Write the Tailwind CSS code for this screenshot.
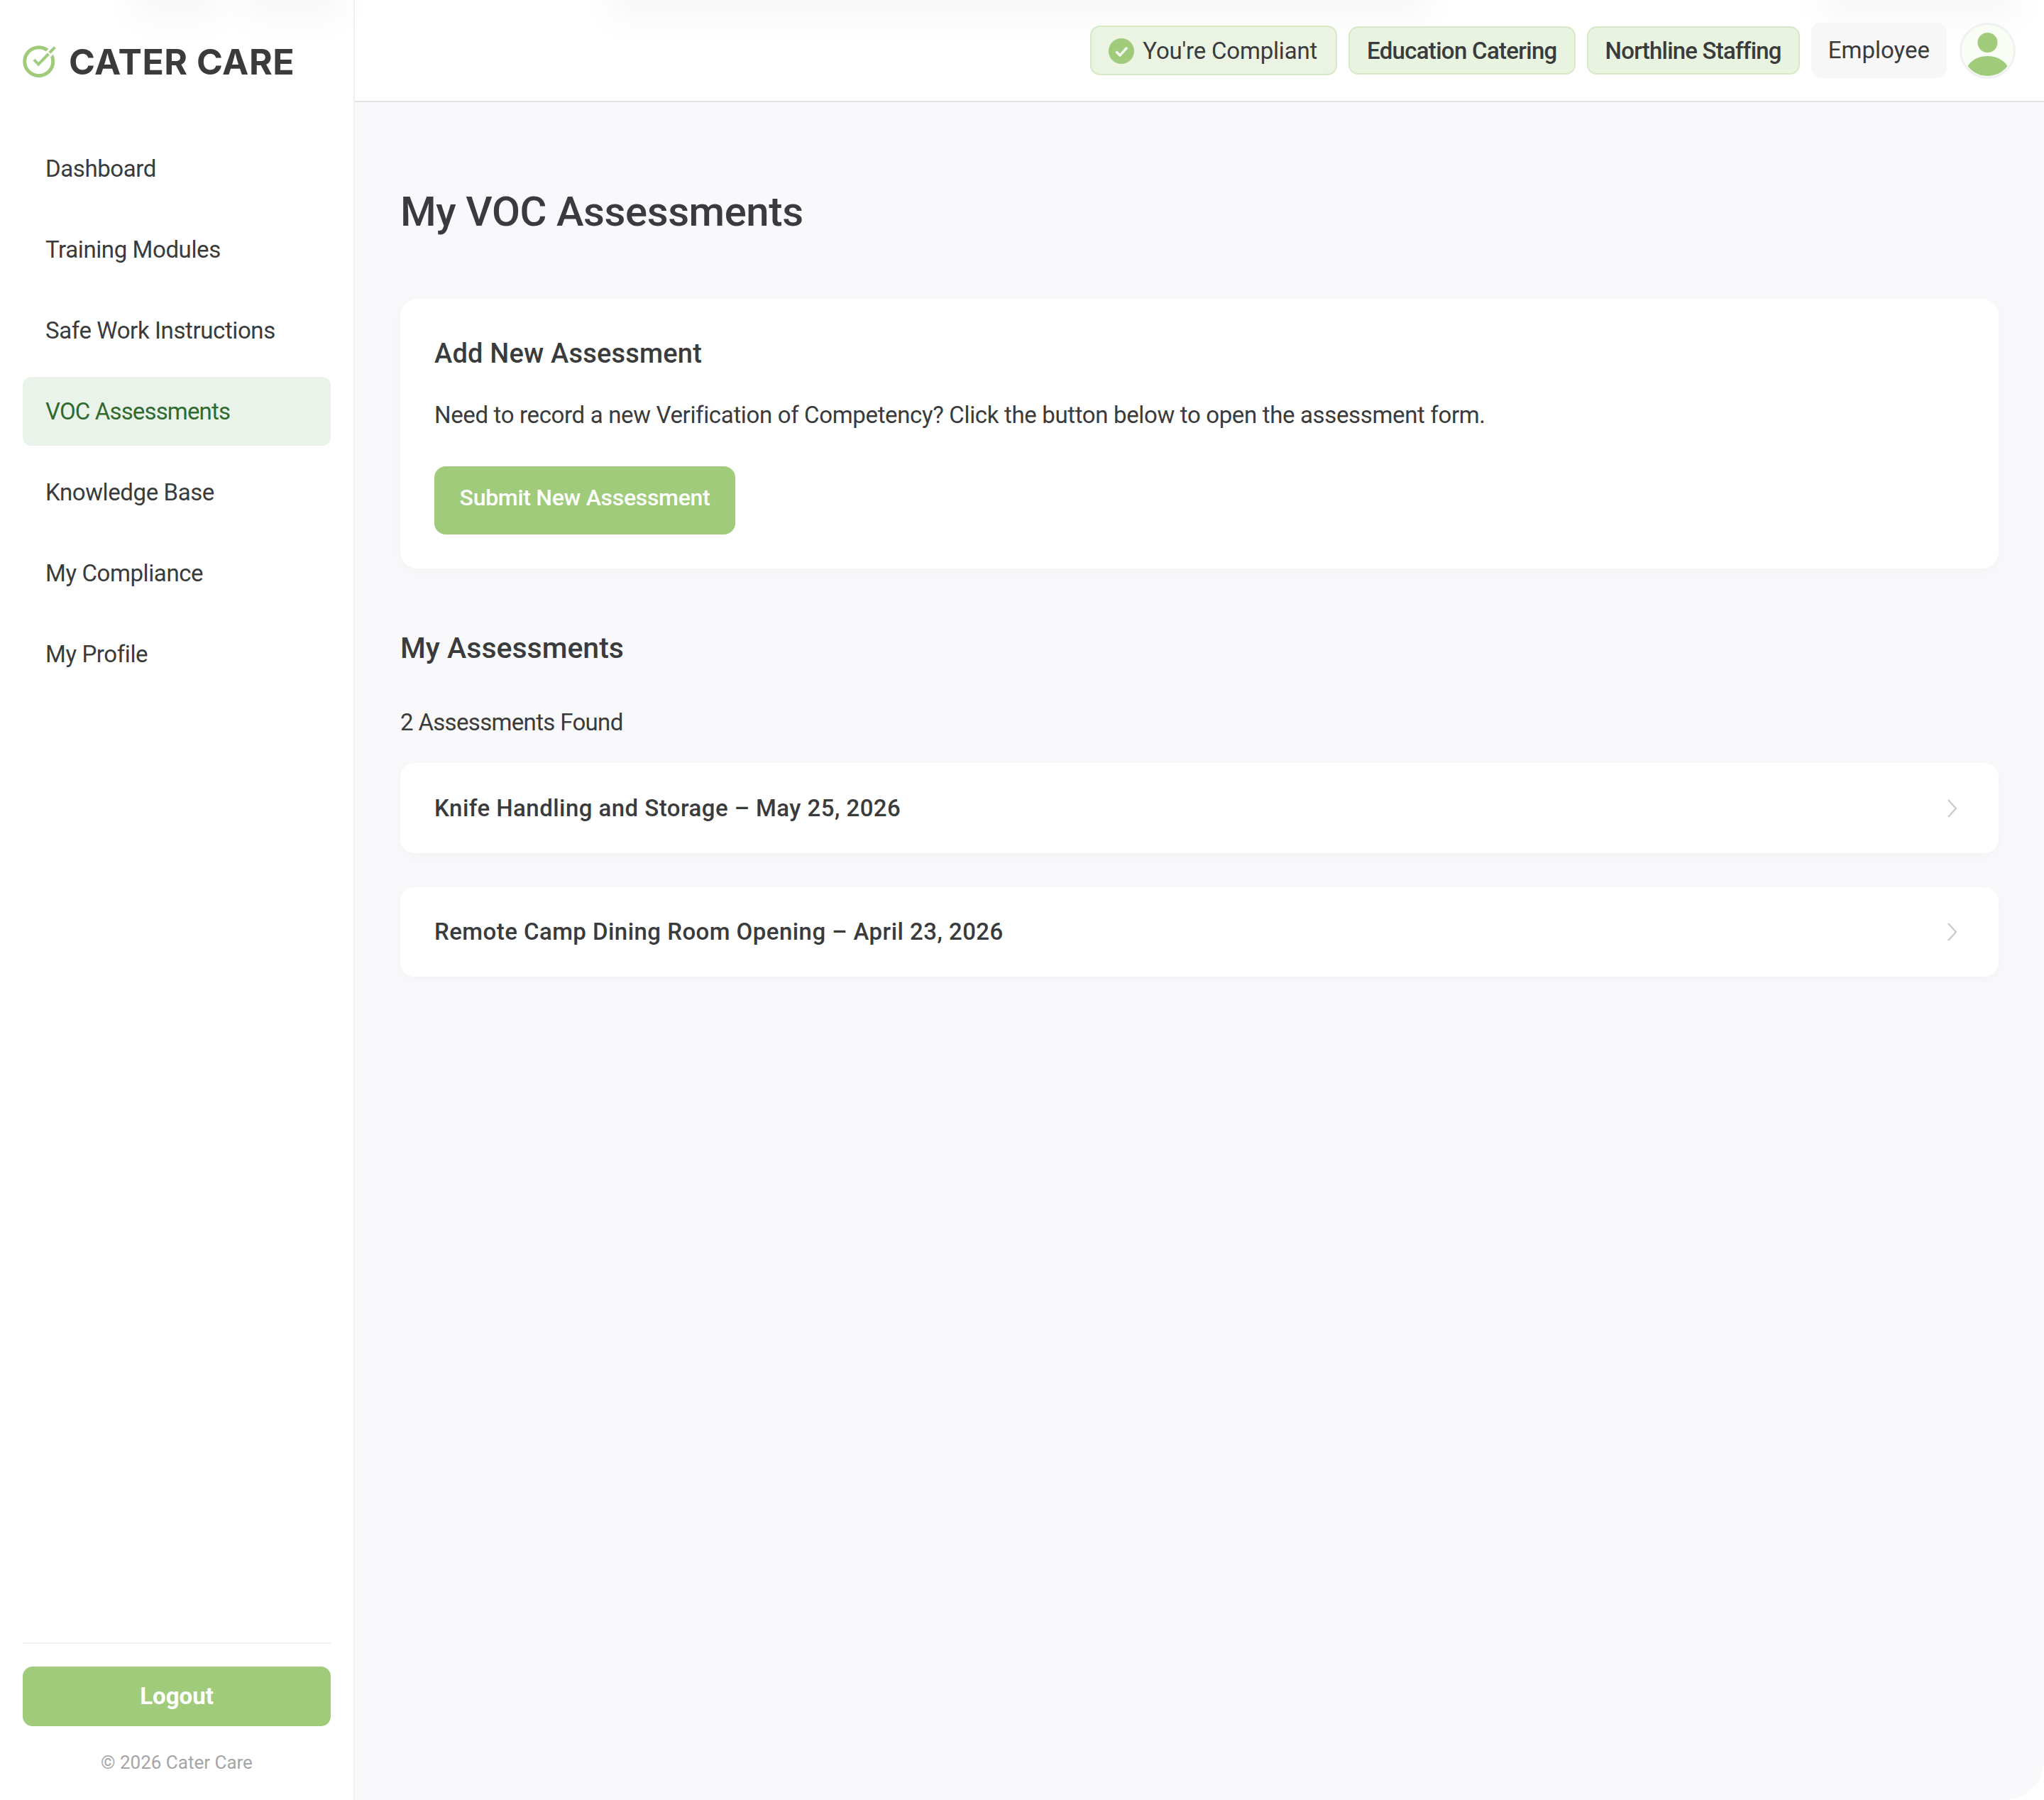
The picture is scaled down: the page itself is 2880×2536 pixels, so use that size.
<!DOCTYPE html>
<html lang="en">
<head>
<meta charset="UTF-8" />
<title>My VOC Assessments</title>
<script src="https://cdn.jsdelivr.net/npm/@tailwindcss/browser@4"></script>
</head>
<body class="bg-white text-[#3a3b3c] font-['Roboto',sans-serif]">
<div class="relative flex w-[2880px] h-[2536px] overflow-hidden">
  <!-- soft shadows bleeding in from above the page -->
  <div class="absolute left-[190px] top-[-30px] w-[120px] h-[55px] bg-black/3 blur-[20px]"></div>
  <div class="absolute left-[345px] top-[-30px] w-[135px] h-[55px] bg-black/3 blur-[20px]"></div>
  <div class="absolute left-[860px] top-[-30px] w-[1150px] h-[55px] bg-black/3 blur-[20px]"></div>
  <div class="absolute left-[2570px] top-[-30px] w-[270px] h-[55px] bg-black/3 blur-[20px]"></div>

  <aside class="relative w-[500px] shrink-0 flex flex-col border-r-2 border-[#f0f0f0] pl-[32px] pr-[32px]">
    <div class="h-[174px] flex items-center gap-[17px]">
      <svg class="w-[48px] h-[48px]" viewBox="0 0 48 48" fill="none">
        <circle cx="22.7" cy="23.7" r="20" stroke="#a0cb7b" stroke-width="5" />
        <path d="M26 24L47 2" stroke="#ffffff" stroke-width="10" />
        <path d="M16 21l6.2 6.7L45.3 3.7" stroke="#a0cb7b" stroke-width="4" />
        <path d="M35.5 10.5l4 4" stroke="#ffffff" stroke-width="2" />
      </svg>
      <span class="font-['Inter',sans-serif] text-[50px] font-bold leading-none tracking-[0.5px] text-[#3a3b3c]">CATER CARE</span>
    </div>
    <nav class="mt-[15px] flex flex-col gap-[17px] text-[33px] tracking-[-0.4px]">
      <a class="h-[97px] flex items-center px-[32px]">Dashboard</a>
      <a class="h-[97px] flex items-center px-[32px]">Training Modules</a>
      <a class="h-[97px] flex items-center px-[32px]">Safe Work Instructions</a>
      <a class="h-[97px] flex items-center px-[32px] rounded-[12px] bg-[#e9f3ea] text-[#2f6b2f] tracking-[-0.85px]">VOC Assessments</a>
      <a class="h-[97px] flex items-center px-[32px]">Knowledge Base</a>
      <a class="h-[97px] flex items-center px-[32px]">My Compliance</a>
      <a class="h-[97px] flex items-center px-[32px]">My Profile</a>
    </nav>
    <div class="mt-auto border-t-2 border-[#f0f0f0] pt-[32px] pb-[36px]">
      <button class="w-full h-[84px] rounded-[14px] bg-[#a0cb7b] text-white text-[33px] font-bold">Logout</button>
      <p class="mt-[34px] text-center text-[26px] leading-[34px] text-[#a5a5a7]">© 2026 Cater Care</p>
    </div>
  </aside>

  <div class="relative flex-1 flex flex-col">
    <header class="h-[144px] border-b-2 border-[#e2e2e2] flex items-center justify-end gap-[16px] pr-[40px] text-[33px]">
      <span class="h-[70px] pl-[24px] pr-[26px] pt-[2px] flex items-center gap-[12px] rounded-[14px] bg-[#ebf4e3] border-2 border-[#d6e9c6] tracking-[-0.2px]">
        <svg class="w-[36px] h-[36px]" viewBox="0 0 36 36" fill="none">
          <circle cx="18" cy="18" r="18" fill="#a0cb7b" />
          <path d="M10.5 18.5l5.5 5.5 10-11" stroke="#f4f9ef" stroke-width="3.5" />
        </svg>
        You're Compliant
      </span>
      <span class="h-[68px] px-[24px] pt-[2px] flex items-center rounded-[14px] bg-[#e8f4e0] border-2 border-[#d6e9c6] font-medium tracking-[-0.7px]">Education Catering</span>
      <span class="h-[68px] px-[24px] pt-[2px] flex items-center rounded-[14px] bg-[#e8f4e0] border-2 border-[#d6e9c6] font-medium tracking-[-0.8px]">Northline Staffing</span>
      <span class="h-[78px] px-[24px] flex items-center rounded-[14px] bg-[#f7f7f7]">Employee</span>
      <span class="ml-[2px] w-[79px] h-[79px] rounded-full border-[3px] border-[#f1f1f1] bg-[#f8fdf5] overflow-hidden">
        <svg class="w-full h-full" viewBox="3 3 73 73">
          <circle cx="39.5" cy="28" r="14" fill="#a0cb7b" />
          <path d="M11.5 61C18 51 29 47 39.5 47C50 47 61 51 67.5 61C61 70 50 75 39.5 75C29 75 18 70 11.5 61Z" fill="#a0cb7b" />
        </svg>
      </span>
    </header>

    <main class="flex-1 rounded-br-[56px] bg-[#f9f9fb] pl-[64px] pr-[64px] pt-[118px]">
      <h1 class="text-[58px] leading-[72px] font-medium tracking-[-0.4px]">My VOC Assessments</h1>

      <section class="mt-[87px] h-[380px] rounded-[24px] bg-white px-[48px] pt-[54px] shadow-[0_4px_24px_rgba(0,0,0,0.03)]">
        <h2 class="text-[38px] leading-[46px] font-medium tracking-[0.2px]">Add New Assessment</h2>
        <p class="mt-[44px] text-[33px] leading-[40px] tracking-[-0.35px]">Need to record a new Verification of Competency? Click the button below to open the assessment form.</p>
        <button class="mt-[52px] w-[424px] h-[96px] pb-[8px] rounded-[16px] bg-[#a0cb7b] text-white text-[32px] font-medium tracking-[-0.3px]">Submit New Assessment</button>
      </section>

      <h2 class="mt-[89px] text-[41px] leading-[46px] font-medium">My Assessments</h2>
      <p class="mt-[62px] text-[33px] leading-[40px] tracking-[-0.67px]">2 Assessments Found</p>

      <div class="mt-[37px] flex flex-col gap-[48px]">
        <div class="h-[127px] rounded-[20px] bg-white pl-[48px] pr-[59px] flex items-center justify-between shadow-[0_4px_20px_rgba(0,0,0,0.03)]">
          <span class="text-[33px] font-medium tracking-[0.45px]">Knife Handling and Storage – May 25, 2026</span>
          <svg class="w-[13px] h-[26px]" viewBox="0 0 13 26" fill="none"><path d="M1 1l11 12L1 25" stroke="#cccccc" stroke-width="2.5" /></svg>
        </div>
        <div class="h-[126px] rounded-[20px] bg-white pl-[48px] pr-[59px] flex items-center justify-between shadow-[0_4px_20px_rgba(0,0,0,0.03)]">
          <span class="text-[33px] font-medium tracking-[0.45px]">Remote Camp Dining Room Opening – April 23, 2026</span>
          <svg class="w-[13px] h-[26px]" viewBox="0 0 13 26" fill="none"><path d="M1 1l11 12L1 25" stroke="#cccccc" stroke-width="2.5" /></svg>
        </div>
      </div>
    </main>
  </div>
</div>
</body>
</html>
